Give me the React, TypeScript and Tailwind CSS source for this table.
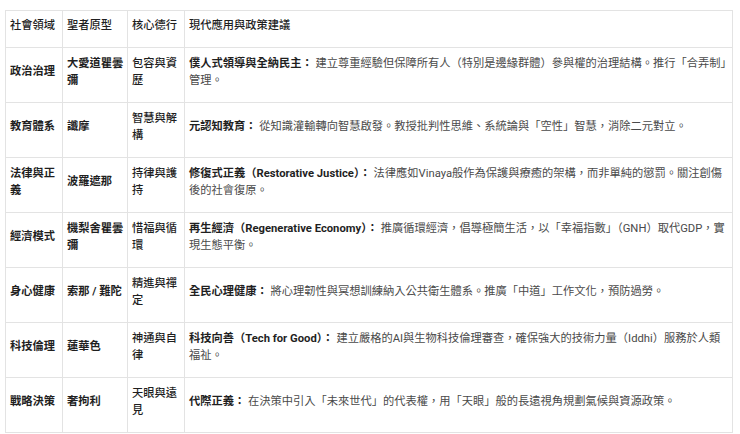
import React from "react";

type Row = {
  domain: string;
  saint: string;
  virtue: string;
  title: string;
  desc: string;
};

const rows: Row[] = [
  {
    domain: "政治治理",
    saint: "大愛道瞿曇彌",
    virtue: "包容與資歷",
    title: "僕人式領導與全納民主：",
    desc: "建立尊重經驗但保障所有人（特別是邊緣群體）參與權的治理結構。推行「合弄制」管理。",
  },
  {
    domain: "教育體系",
    saint: "讖摩",
    virtue: "智慧與解構",
    title: "元認知教育：",
    desc: "從知識灌輸轉向智慧啟發。教授批判性思維、系統論與「空性」智慧，消除二元對立。",
  },
  {
    domain: "法律與正義",
    saint: "波羅遮那",
    virtue: "持律與護持",
    title: "修復式正義（Restorative Justice）：",
    desc: "法律應如Vinaya般作為保護與療癒的架構，而非單純的懲罰。關注創傷後的社會復原。",
  },
  {
    domain: "經濟模式",
    saint: "機梨舍瞿曇彌",
    virtue: "惜福與循環",
    title: "再生經濟（Regenerative Economy）：",
    desc: "推廣循環經濟，倡導極簡生活，以「幸福指數」（GNH）取代GDP，實現生態平衡。",
  },
  {
    domain: "身心健康",
    saint: "索那 / 難陀",
    virtue: "精進與禪定",
    title: "全民心理健康：",
    desc: "將心理韌性與冥想訓練納入公共衛生體系。推廣「中道」工作文化，預防過勞。",
  },
  {
    domain: "科技倫理",
    saint: "蓮華色",
    virtue: "神通與自律",
    title: "科技向善（Tech for Good）：",
    desc: "建立嚴格的AI與生物科技倫理審查，確保強大的技術力量（Iddhi）服務於人類福祉。",
  },
  {
    domain: "戰略決策",
    saint: "奢拘利",
    virtue: "天眼與遠見",
    title: "代際正義：",
    desc: "在決策中引入「未來世代」的代表權，用「天眼」般的長遠視角規劃氣候與資源政策。",
  },
];

const font = {
  fontFamily:
    '"Roboto", "Noto Sans CJK TC", "Noto Sans CJK SC", sans-serif',
};

export default function App() {
  return (
    <div className="w-[740px] h-[434px] bg-white overflow-hidden pt-[10px] pl-[5px]" style={font}>
      <table className="table-fixed border-collapse w-[728px] text-[11.25px] leading-[17.5px]">
        <colgroup>
          <col className="w-[57px]" />
          <col className="w-[65px]" />
          <col className="w-[57px]" />
          <col />
        </colgroup>
        <thead>
          <tr>
            {["社會領域", "聖者原型", "核心德行", "現代應用與政策建議"].map((h) => (
              <th
                key={h}
                className="border border-[#e3e3e3] text-left align-middle font-medium text-[#1f1f1f] pl-[4px] pr-[2px] pt-[6px] pb-[12px]"
              >
                {h}
              </th>
            ))}
          </tr>
        </thead>
        <tbody>
          {rows.map((r) => (
            <tr key={r.domain}>
              <td className="border border-[#e3e3e3] align-middle font-bold text-[#1f1f1f] pl-[4px] pr-[2px] pt-[7px] pb-[12px]">
                {r.domain}
              </td>
              <td className="border border-[#e3e3e3] align-middle font-bold text-[#1f1f1f] pl-[4px] pr-[2px] pt-[7px] pb-[12px]">
                {r.saint}
              </td>
              <td className="border border-[#e3e3e3] align-middle font-medium text-[#1f1f1f] pl-[4px] pr-[2px] pt-[7px] pb-[12px]">
                {r.virtue}
              </td>
              <td className="border border-[#e3e3e3] align-middle text-[#4a4a4a] pl-[4px] pr-[5px] pt-[7px] pb-[12px]">
                <span className="font-bold text-[#1f1f1f]">{r.title}</span> {r.desc}
              </td>
            </tr>
          ))}
        </tbody>
      </table>
    </div>
  );
}
